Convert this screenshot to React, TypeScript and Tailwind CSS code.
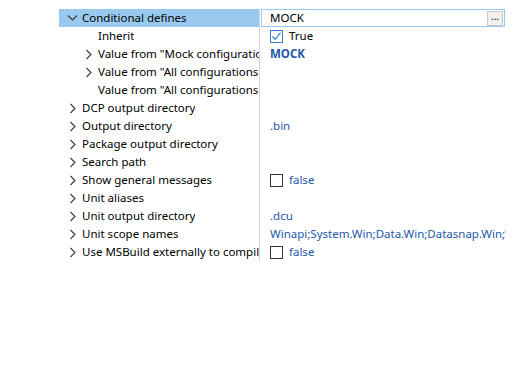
import React from "react";

const Right = () => (
  <svg width="8" height="11" viewBox="0 0 8 11" className="shrink-0">
    <path d="M1.5 1 L6 5.5 L1.5 10" fill="none" stroke="#3a3a3a" strokeWidth="1.1" />
  </svg>
);
const Down = () => (
  <svg width="11" height="8" viewBox="0 0 11 8" className="shrink-0">
    <path d="M1 1.5 L5.5 6 L10 1.5" fill="none" stroke="#3a3a3a" strokeWidth="1.1" />
  </svg>
);

const Check = ({ checked }: { checked?: boolean }) => (
  <div
    className={
      "w-[13px] h-[13px] border flex items-center justify-center bg-white shrink-0 " +
      (checked ? "border-[#3a7fd2]" : "border-[#333333]")
    }
  >
    {checked && (
      <svg width="11" height="11" viewBox="0 0 11 11">
        <path d="M1.5 5.5 L4.2 8.3 L9.5 1.8" fill="none" stroke="#3a7fd2" strokeWidth="1.3" />
      </svg>
    )}
  </div>
);

type Row = {
  name: string;
  level: number;
  exp?: "down" | "right" | "none";
  value?: React.ReactNode;
  selected?: boolean;
};

const blue = "text-[#2358a8]";

const rows: Row[] = [
  { name: "Conditional defines", level: 0, exp: "down", selected: true },
  {
    name: "Inherit",
    level: 1,
    exp: "none",
    value: (
      <div className="flex items-center gap-[6px]">
        <Check checked />
        <span className="text-black">True</span>
      </div>
    ),
  },
  {
    name: 'Value from "Mock configuration"',
    level: 1,
    exp: "right",
    value: <span className={"font-bold " + blue}>MOCK</span>,
  },
  { name: 'Value from "All configurations - All platforms"', level: 1, exp: "right" },
  { name: 'Value from "All configurations - Windows"', level: 1, exp: "none" },
  { name: "DCP output directory", level: 0, exp: "right" },
  { name: "Output directory", level: 0, exp: "right", value: <span className={blue}>.bin</span> },
  { name: "Package output directory", level: 0, exp: "right" },
  { name: "Search path", level: 0, exp: "right" },
  {
    name: "Show general messages",
    level: 0,
    exp: "right",
    value: (
      <div className="flex items-center gap-[6px]">
        <Check />
        <span className={blue}>false</span>
      </div>
    ),
  },
  { name: "Unit aliases", level: 0, exp: "right" },
  { name: "Unit output directory", level: 0, exp: "right", value: <span className={blue}>.dcu</span> },
  {
    name: "Unit scope names",
    level: 0,
    exp: "right",
    value: (
      <span className={"min-w-0 overflow-hidden whitespace-nowrap " + blue}>
        Winapi;System.Win;Data.Win;Datasnap.Win;Web.Win;Soap.Win;Xml.Win;Bde
      </span>
    ),
  },
  {
    name: "Use MSBuild externally to compile",
    level: 0,
    exp: "right",
    value: (
      <div className="flex items-center gap-[6px]">
        <Check />
        <span className={blue}>false</span>
      </div>
    ),
  },
];

export default function App() {
  return (
    <div
      className="w-[532px] h-[376px] bg-white overflow-hidden text-[11.5px] text-black"
      style={{ fontFamily: '"Noto Sans", "Open Sans", sans-serif' }}
    >
      <div className="pt-[9px] pl-[59px] flex flex-col">
        {rows.map((r, i) => (
          <div key={i} className="flex h-[18px]">
            <div
              className={
                "w-[200px] shrink-0 flex items-center overflow-hidden whitespace-nowrap " +
                (r.selected ? "bg-[#99c9ef]" : "")
              }
            >
              <div
                className={
                  "shrink-0 flex items-center justify-center " +
                  (r.level === 0 ? "w-[23px] pl-[4px]" : "w-[39px] pl-[20px]")
                }
              >
                {r.exp === "down" && <Down />}
                {r.exp === "right" && <Right />}
              </div>
              <span className="leading-[18px] min-w-0 overflow-hidden whitespace-nowrap">{r.name}</span>
            </div>
            <div className="w-[1px] bg-[#d6d6d6] shrink-0" />
            <div className="w-[246px] shrink-0 overflow-hidden whitespace-nowrap flex items-center">
              {r.selected ? (
                <div className="ml-[1px] w-[244px] h-[18px] border border-[#99c9ef] flex items-center">
                  <span className="pl-[8px] flex-1">MOCK</span>
                  <div className="w-[16px] h-[15px] bg-[#f0f0f0] border border-[#c8c8c8] flex items-center justify-center text-[10px] leading-none mr-[1px]">
                    <span className="-mt-[4px]">...</span>
                  </div>
                </div>
              ) : (
                <div className="pl-[10px] flex items-center min-w-0 overflow-hidden">{r.value}</div>
              )}
            </div>
          </div>
        ))}
      </div>
    </div>
  );
}
